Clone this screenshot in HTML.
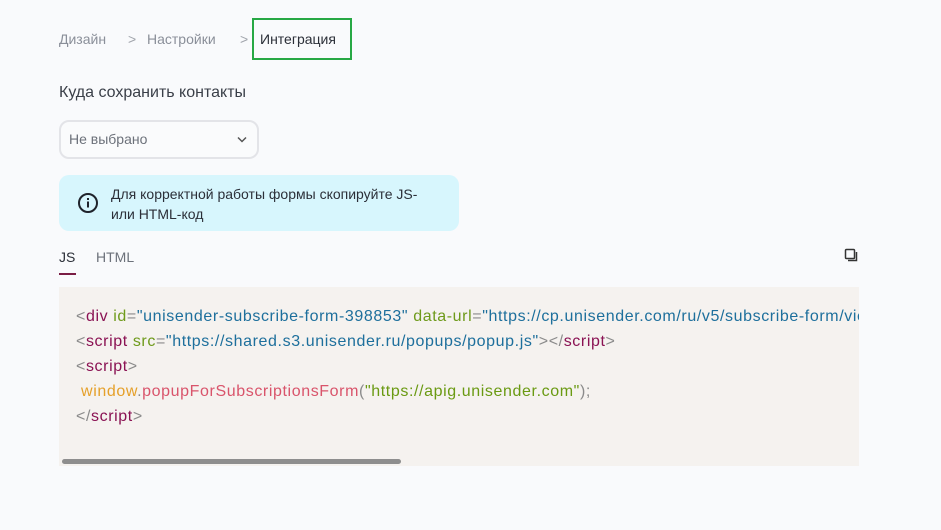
<!DOCTYPE html>
<html><head><meta charset="utf-8"><style>
*{box-sizing:border-box;margin:0;padding:0}
body{width:941px;height:530px;background:#f9fafc;font-family:"Liberation Sans","Noto Sans CJK SC",sans-serif;position:relative;overflow:hidden;color:#2b2f38}
.a{position:absolute}
.bc{top:31px;font-size:14px;color:#8a8f99}
.code{left:59px;top:287px;width:800px;height:179px;background:#f5f2ef;overflow:hidden}
.code pre{position:absolute;left:17px;top:17px;font-family:"Liberation Sans",sans-serif;font-size:16px;line-height:25px;letter-spacing:0.6px;color:#8b8b8b;white-space:pre}
.t{color:#8a1253}.at{color:#6e9a1a}.s{color:#1d6f9c}.w{color:#e5a02a}.f{color:#d9546b}.g{color:#6a9a12}
</style></head><body>
<div class="a bc" style="left:59px">Дизайн</div>
<div class="a bc" style="left:128px;color:#a0a4ab">&gt;</div>
<div class="a bc" style="left:147px">Настройки</div>
<div class="a bc" style="left:240px;color:#a0a4ab">&gt;</div>
<div class="a" style="left:252px;top:18px;width:100px;height:42px;border:2px solid #27a844"></div>
<div class="a bc" style="left:260px;color:#2b2f38">Интеграция</div>
<div class="a" style="left:59px;top:84px;font-size:16px;color:#3a3f48">Куда сохранить контакты</div>
<div class="a" style="left:59px;top:120px;width:200px;height:39px;border:2px solid #e3e4e8;border-radius:10px;background:#fafbfc"></div>
<div class="a" style="left:69px;top:131px;font-size:14px;color:#6c717a">Не выбрано</div>
<svg class="a" style="left:236px;top:135px" width="12" height="9" viewBox="0 0 12 9"><path d="M2 2.5l4 4 4-4" fill="none" stroke="#555" stroke-width="1.5"/></svg>
<div class="a" style="left:59px;top:175px;width:400px;height:56px;background:#d7f6fd;border-radius:10px"></div>
<svg class="a" style="left:77px;top:192px" width="22" height="22" viewBox="0 0 22 22"><circle cx="11" cy="11" r="9" fill="none" stroke="#1f232b" stroke-width="2"/><rect x="10" y="9.5" width="2" height="6" fill="#1f232b"/><rect x="10" y="6" width="2" height="2" fill="#1f232b"/></svg>
<div class="a" style="left:111px;top:184px;font-size:14px;line-height:20px;color:#2b2f38;width:340px">Для корректной работы формы скопируйте JS-<br>или HTML-код</div>
<div class="a" style="left:59px;top:249px;font-size:14px;color:#2b2f38">JS</div>
<div class="a" style="left:59px;top:273px;width:17px;height:2px;background:#7a1d44"></div>
<div class="a" style="left:96px;top:249px;font-size:14px;color:#6c717a">HTML</div>
<svg class="a" style="left:844px;top:248px" width="14" height="14" viewBox="0 0 14 14"><rect x="1.5" y="1.5" width="9" height="9" rx="1" fill="none" stroke="#333" stroke-width="1.5"/><path d="M4 12.5h8.5V4" fill="none" stroke="#333" stroke-width="1.5"/></svg>
<div class="a code"><pre>&lt;<span class="t">div</span> <span class="at">id</span>=<span class="s">"unisender-subscribe-form-398853"</span> <span class="at">data-url</span>=<span class="s">"https://cp.unisender.com/ru/v5/subscribe-form/view/abc"</span>&gt;
&lt;<span class="t">script</span> <span class="at">src</span>=<span class="s">"https://shared.s3.unisender.ru/popups/popup.js"</span>&gt;&lt;/<span class="t">script</span>&gt;
&lt;<span class="t">script</span>&gt;
 <span class="w">window</span>.<span class="f">popupForSubscriptionsForm</span>(<span class="g">"https://apig.unisender.com"</span>);
&lt;/<span class="t">script</span>&gt;</pre>
<div class="a" style="left:3px;top:172px;width:339px;height:5px;border-radius:3px;background:#8e8e8e"></div>
</div>
</body></html>
